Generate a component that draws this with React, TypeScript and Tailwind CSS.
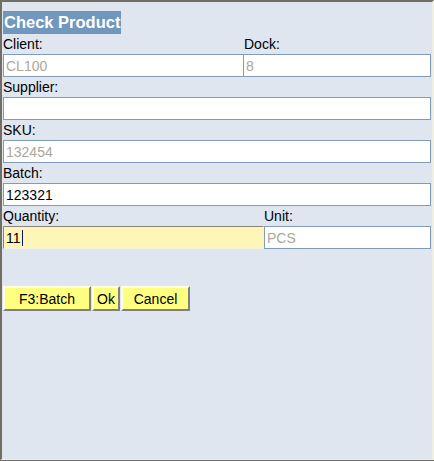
import React from "react";

const font = { fontFamily: '"Liberation Sans", Arial, sans-serif' };

function Label({ children, className = "" }: { children: React.ReactNode; className?: string }) {
  return (
    <div className={"h-[20px] pt-[2px] text-[14px] leading-[16px] text-black " + className}>{children}</div>
  );
}

function Field({ value, disabled, className = "" }: { value: string; disabled?: boolean; className?: string }) {
  return (
    <div
      className={
        "h-[23px] border border-[#7f9db9] bg-white pl-[2px] flex items-center text-[14px] leading-[16px] " +
        (disabled ? "text-[#aca899] " : "text-black ") +
        className
      }
    >
      {value}
    </div>
  );
}

export default function App() {
  return (
    <div className="w-[434px] h-[461px] border-b border-[#716f64] flex flex-col" style={font}>
      <div className="flex-1 bg-[#dfe6f0] border-t-2 border-l-2 border-r-2 border-b border-t-[#716f64] border-l-[#716f64] border-r-[#f1efe2] border-b-[#f1efe2] px-[1px] flex flex-col">
        <div className="mt-[9px] h-[23px] self-start bg-[#7297bd] px-[1px] text-white font-bold text-[16.5px] leading-[23px]">
          Check Product
        </div>

        <div className="flex">
          <div className="w-[240px] flex flex-col">
            <Label>Client:</Label>
            <Field value="CL100" disabled className="border-r-0" />
          </div>
          <div className="flex-1 flex flex-col">
            <Label className="pl-[1px]">Dock:</Label>
            <Field value="8" disabled />
          </div>
        </div>

        <Label>Supplier:</Label>
        <Field value="" />

        <Label>SKU:</Label>
        <Field value="132454" disabled />

        <Label>Batch:</Label>
        <Field value="123321" />

        <div className="flex">
          <div className="w-[261px] flex flex-col">
            <Label>Quantity:</Label>
            <div className="h-[23px] border border-t-[#8a877a] border-l-[#8a877a] border-r-[#fff5b8] border-b-[#f1efe2] bg-[#fff5b8] pl-[2px] flex items-center text-[14px] leading-[16px] text-black">
              11<span className="ml-[1px] inline-block w-[1px] h-[16px] bg-[#0a1a5a]" />
            </div>
          </div>
          <div className="flex-1 flex flex-col">
            <Label>Unit:</Label>
            <Field value="PCS" disabled />
          </div>
        </div>

        <div className="mt-[37px] flex gap-[1px]">
          <button className="w-[88px] h-[25px] bg-[#ffff80] border-2 border-t-[#ffffe0] border-l-[#ffffe0] border-r-[#808080] border-b-[#808080] text-[14px] leading-[16px] text-black">
            F3:Batch
          </button>
          <button className="w-[28px] h-[25px] bg-[#ffff80] border-2 border-t-[#ffffe0] border-l-[#ffffe0] border-r-[#808080] border-b-[#808080] text-[14px] leading-[16px] text-black">
            Ok
          </button>
          <button className="w-[69px] h-[25px] bg-[#ffff80] border-2 border-t-[#ffffe0] border-l-[#ffffe0] border-r-[#808080] border-b-[#808080] text-[14px] leading-[16px] text-black">
            Cancel
          </button>
        </div>
      </div>
    </div>
  );
}
